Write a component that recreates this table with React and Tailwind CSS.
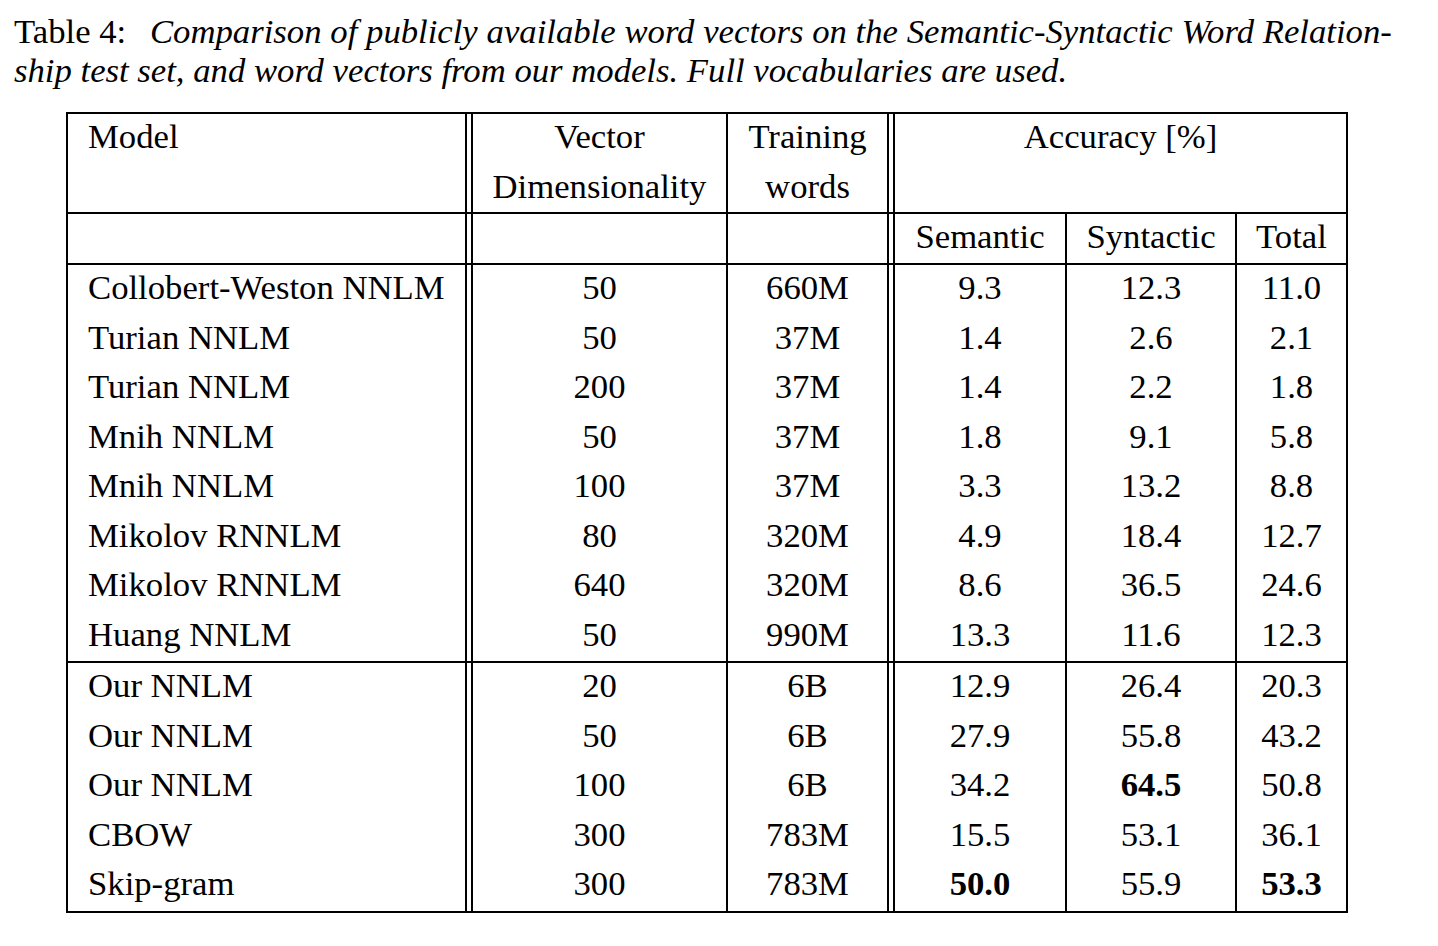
import React from "react";

const group1 = [
  ["Collobert-Weston NNLM", "50", "660M", "9.3", "12.3", "11.0"],
  ["Turian NNLM", "50", "37M", "1.4", "2.6", "2.1"],
  ["Turian NNLM", "200", "37M", "1.4", "2.2", "1.8"],
  ["Mnih NNLM", "50", "37M", "1.8", "9.1", "5.8"],
  ["Mnih NNLM", "100", "37M", "3.3", "13.2", "8.8"],
  ["Mikolov RNNLM", "80", "320M", "4.9", "18.4", "12.7"],
  ["Mikolov RNNLM", "640", "320M", "8.6", "36.5", "24.6"],
  ["Huang NNLM", "50", "990M", "13.3", "11.6", "12.3"],
];

const group2 = [
  ["Our NNLM", "20", "6B", "12.9", "26.4", "20.3"],
  ["Our NNLM", "50", "6B", "27.9", "55.8", "43.2"],
  ["Our NNLM", "100", "6B", "34.2", "*64.5", "50.8"],
  ["CBOW", "300", "783M", "15.5", "53.1", "36.1"],
  ["Skip-gram", "300", "783M", "*50.0", "55.9", "*53.3"],
];

const line1 = [
  "Comparison",
  "of",
  "publicly",
  "available",
  "word",
  "vectors",
  "on",
  "the",
  "Semantic-Syntactic",
  "Word",
  "Relation-",
];

function Val({ v }) {
  if (v.startsWith("*")) return <span className="font-bold">{v.slice(1)}</span>;
  return <span>{v}</span>;
}

function Spacer() {
  return <div className="w-[8px] shrink-0 self-stretch border-x-2 border-black" />;
}

function DataRow({ r }) {
  return (
    <div className="flex h-[49.5px] leading-[46px]">
      <div className="w-[397px] shrink-0 pl-[20px] whitespace-nowrap">{r[0]}</div>
      <Spacer />
      <div className="w-[253px] shrink-0 text-center"><Val v={r[1]} /></div>
      <div className="w-[161px] shrink-0 border-l-2 border-black text-center"><Val v={r[2]} /></div>
      <Spacer />
      <div className="w-[170px] shrink-0 text-center"><Val v={r[3]} /></div>
      <div className="w-[170px] shrink-0 border-l-2 border-black text-center"><Val v={r[4]} /></div>
      <div className="w-[111px] shrink-0 border-l-2 border-black text-center"><Val v={r[5]} /></div>
    </div>
  );
}

export default function App() {
  return (
    <div
      className="w-[1438px] h-[946px] bg-white text-black text-[34.7px] overflow-hidden"
      style={{ fontFamily: '"Liberation Serif", "Times New Roman", serif' }}
    >
      <div className="pt-[12px] pl-[14px] leading-[39px]">
        <div className="flex w-[1378px] justify-between whitespace-nowrap">
          <span className="mr-[15px]">Table 4:</span>
          {line1.map((w, i) => (
            <span key={i} className="italic">
              {w}
            </span>
          ))}
        </div>
        <div className="italic whitespace-nowrap">
          ship test set, and word vectors from our models. Full vocabularies are used.
        </div>
      </div>

      <div className="ml-[66px] mt-[22px] w-[1282px] border-2 border-black">
        {/* header row 1 */}
        <div className="flex h-[100px] border-b-2 border-black">
          <div className="w-[397px] shrink-0 pl-[20px]">
            <div className="h-[50px] leading-[45px]">Model</div>
          </div>
          <Spacer />
          <div className="w-[253px] shrink-0 text-center">
            <div className="h-[50px] leading-[45px]">Vector</div>
            <div className="h-[50px] leading-[45px]">Dimensionality</div>
          </div>
          <div className="w-[161px] shrink-0 border-l-2 border-black text-center">
            <div className="h-[50px] leading-[45px]">Training</div>
            <div className="h-[50px] leading-[45px]">words</div>
          </div>
          <Spacer />
          <div className="w-[451px] shrink-0 text-center">
            <div className="h-[50px] leading-[45px]">Accuracy [%]</div>
          </div>
        </div>

        {/* header row 2 */}
        <div className="flex h-[51px] border-b-2 border-black leading-[45px]">
          <div className="w-[397px] shrink-0" />
          <Spacer />
          <div className="w-[253px] shrink-0" />
          <div className="w-[161px] shrink-0 border-l-2 border-black" />
          <Spacer />
          <div className="w-[170px] shrink-0 text-center">Semantic</div>
          <div className="w-[170px] shrink-0 border-l-2 border-black text-center">Syntactic</div>
          <div className="w-[111px] shrink-0 border-l-2 border-black text-center">Total</div>
        </div>

        <div className="border-b-2 border-black">
          {group1.map((r, i) => (
            <DataRow key={i} r={r} />
          ))}
        </div>
        <div>
          {group2.map((r, i) => (
            <DataRow key={i} r={r} />
          ))}
        </div>
      </div>
    </div>
  );
}
